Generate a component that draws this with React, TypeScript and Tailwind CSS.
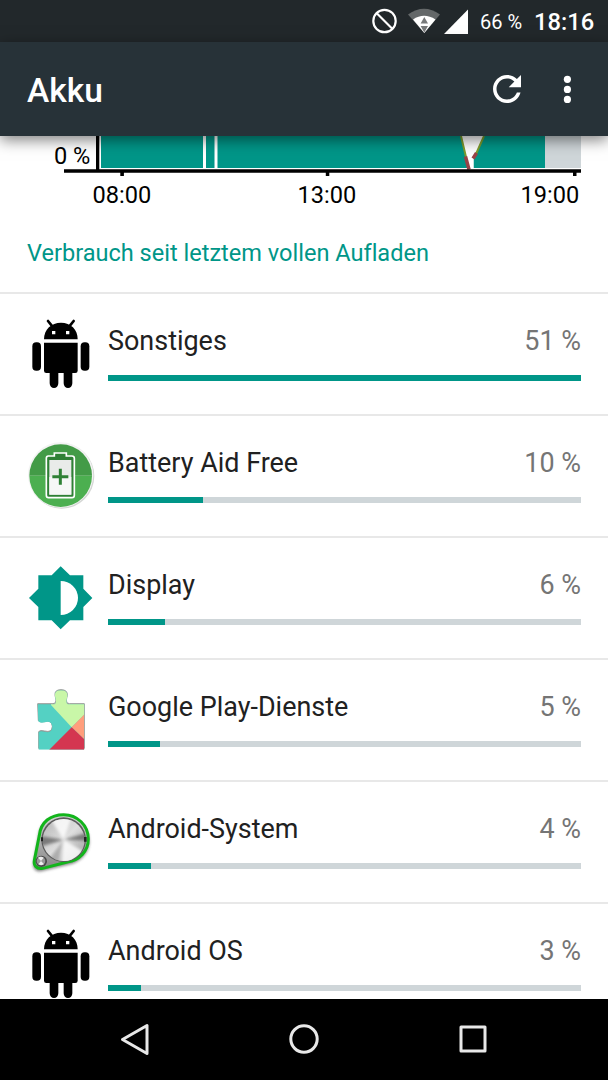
import React from "react";

interface BatteryItem {
  name: string;
  percent: string;
  barWidth: number;
  icon: React.ReactNode;
}

function AndroidIcon() {
  return (
    <svg viewBox="21 12 204 240" className="h-20 w-[68px]">
      <g stroke="#000" strokeWidth="8" strokeLinecap="round">
        <path d="M84 33l13 16M161 33l-13 16" />
      </g>
      <path d="M72 88c0-30 22-50 51-50s50 20 50 50z" />
      <path d="M96 63h10v10H96zM138 63h10v10h-10z" fill="#fff" />
      <path d="M72 98h101v84q0 7-7 7H79q-7 0-7-7z" />
      <rect x="37" y="97" width="26" height="85" rx="12" />
      <rect x="182" y="97" width="26" height="85" rx="12" />
      <path d="M89 180h26v40a13 14 0 0 1-26 0zM131 180h26v40a13 14 0 0 1-26 0z" />
    </svg>
  );
}

function BatteryAidIcon() {
  return (
    <svg viewBox="21 3 204 240" className="h-20 w-[68px]">
      <circle cx="125" cy="123" r="98" fill="#d4d6d4" />
      <circle cx="122" cy="120" r="98" fill="#f3f3f3" />
      <path d="M28 122a94 94 0 0 1 188 0z" fill="#439b47" />
      <path d="M28 122a94 94 0 0 0 188 0z" fill="#4caf50" />
      <path d="M85 63h18v-9h36v9h17q7 0 7 7v111q0 7-7 7H86q-7 0-7-7V70q0-7 6-7z" fill="#2f8035" stroke="#fff" strokeWidth="5" />
      <path d="M88 75h66v104H88z" fill="#e9ebe9" />
      <path d="M88 126h66v53H88z" fill="#f7f7f7" />
      <path d="M121 101v48M97 125h48" stroke="#2f8035" strokeWidth="9" />
    </svg>
  );
}

function DisplayIcon() {
  return (
    <svg viewBox="21 9 204 240" className="h-20 w-[68px]">
      <path d="M122 34l28 27h40v40l27 28-27 27v40h-40l-28 27-27-27H55v-40l-28-27 28-28V61h40z" fill="#009688" />
      <path d="M122 78a52 51 0 0 1 0 102z" fill="#fff" />
    </svg>
  );
}

function PlayServicesIcon() {
  return (
    <svg viewBox="21 0 204 240" className="h-20 w-[68px]">
      <defs>
        <clipPath id="puzzle">
          <path d="M53 71h46q10 0 9-11l-3-14q-2-17 18-17t19 17l-3 14q-1 11 9 11h45v136H56v-52q4-6 18-2 22 6 23-14-2-20-23-14-14 3-19-3z" />
        </clipPath>
      </defs>
      <path d="M53 71h46q10 0 9-11l-3-14q-2-17 18-17t19 17l-3 14q-1 11 9 11h45v134H56v-50q4-6 18-2 22 6 23-14-2-20-23-14-14 3-19-3z" fill="#8c9490" stroke="#9a9f9c" strokeWidth="3" />
      <g clipPath="url(#puzzle)" transform="translate(0 2)">
        <path d="M50 20h147v190H50z" fill="#54d1c3" />
        <path d="M93 73V20h104v78l-42 42z" fill="#c9f7a8" />
        <path d="M155 140l42-43v83z" fill="#ff9e7c" />
        <path d="M155 140l42 40v30H85z" fill="#d43650" />
      </g>
    </svg>
  );
}

function SystemIcon() {
  return (
    <svg viewBox="21 6 204 240" className="h-20 w-[68px]">
      <defs>
        <linearGradient id="plate" x1="0" y1="0" x2="0" y2="1">
          <stop offset="0" stopColor="#d5d5d5" />
          <stop offset="1" stopColor="#888" />
        </linearGradient>
        <linearGradient id="knob" x1="0" y1="0" x2="1" y2="1">
          <stop offset="0" stopColor="#b5b5b5" />
          <stop offset=".5" stopColor="#dedede" />
          <stop offset="1" stopColor="#9c9c9c" />
        </linearGradient>
        <filter id="soft" x="-20%" y="-20%" width="140%" height="140%">
          <feGaussianBlur stdDeviation="5" />
        </filter>
        <clipPath id="knobEdge">
          <circle cx="131" cy="120" r="63" />
        </clipPath>
      </defs>
      <path d="M56 106C60 66 90 43 132 43c42 0 77 34 77 76 0 36-29 66-67 71l-78 19c-18 2-26-11-23-26z" fill="#555" opacity=".75" filter="url(#soft)" transform="translate(-1 5)" />
      <path d="M58 106C62 66 92 44 131 44c41 0 74 32 74 73 0 36-27 64-63 69l-74 19c-18 3-28-9-25-24z" fill="url(#plate)" stroke="#12b51b" strokeWidth="9" />
      <circle cx="131" cy="119" r="67" fill="#5c5c5c" />
      <circle cx="131" cy="120" r="63" fill="url(#knob)" />
      <g clipPath="url(#knobEdge)">
        <g filter="url(#soft)">
          <path d="M131 119L84 45l75-5zM131 119l58 35-25 35-40 5z" fill="#fff" opacity=".8" />
          <path d="M131 119L60 108v32zM131 119l75-22v25z" fill="#666" opacity=".8" />
          <path d="M131 119L86 180l24 14z" fill="#888" opacity=".5" />
        </g>
      </g>
      <path d="M63 112h6v12h-6zM192 111h8v14h-8z" fill="#222" />
      <circle cx="64" cy="184" r="17" fill="#4a4a4a" />
      <circle cx="63" cy="183" r="13" fill="#999" />
      <path d="M63 183l-9-10q9-6 17 0zM63 183l-8 10q8 5 17 0z" fill="#eee" />
    </svg>
  );
}

const ITEMS: BatteryItem[] = [
  { name: "Sonstiges", percent: "51 %", barWidth: 473, icon: <AndroidIcon /> },
  { name: "Battery Aid Free", percent: "10 %", barWidth: 95, icon: <BatteryAidIcon /> },
  { name: "Display", percent: "6 %", barWidth: 57, icon: <DisplayIcon /> },
  { name: "Google Play-Dienste", percent: "5 %", barWidth: 52, icon: <PlayServicesIcon /> },
  { name: "Android-System", percent: "4 %", barWidth: 43, icon: <SystemIcon /> },
  { name: "Android OS", percent: "3 %", barWidth: 33, icon: <AndroidIcon /> },
];

function StatusBar() {
  return (
    <div className="flex h-[42px] shrink-0 items-center bg-[#22282b] pl-[371px] text-white">
      <svg viewBox="0 0 26 26" className="mr-[10px] h-[26px] w-[26px]" fill="none" stroke="#fff" strokeWidth="2.2">
        <circle cx="13.5" cy="13" r="11.2" />
        <path d="M5.5 5l16 16" />
      </svg>
      <svg viewBox="0 0 34 26" className="mr-[3px] h-[26px] w-[34px]">
        <path d="M1 6.5Q17-5 33 6.5L17.300 25z" fill="#646869" />
        <path d="M6 11.500Q17 4 28.500 11.500L17.300 25z" fill="#fff" />
        <path d="M17.300 9l3.700 6.500h-7.400zM13.600 18H21l-3.700 6.500z" fill="#77797a" />
      </svg>
      <svg viewBox="0 0 25 25" className="h-[25px] w-[25px]">
        <path d="M24 .5V25H0z" fill="#fff" />
      </svg>
      <span className="ml-[11px] mt-[2px] w-[54px] whitespace-nowrap text-[20px] leading-[28px]">66 %</span>
      <span className="mt-[2px] whitespace-nowrap text-[23.7px] leading-[28px] font-medium">18:16</span>
    </div>
  );
}

function Toolbar() {
  return (
    <header className="z-10 flex h-[94px] shrink-0 items-center bg-[#273238] pl-[27px] pr-[37px] text-white shadow-[0_4px_14px_rgba(0,0,0,0.5)]">
      <h1 className="mt-[3px] flex-1 text-[33.5px] leading-[40px] font-medium">Akku</h1>
      <svg viewBox="4 4 16 16" className="mr-[42px] h-[28px] w-[28px]" fill="#fff">
        <path d="M17.650 6.350C16.200 4.900 14.210 4 12 4c-4.420 0-7.990 3.580-7.990 8s3.570 8 7.990 8c3.730 0 6.840-2.550 7.730-6h-2.080c-.82 2.330-3.040 4-5.650 4-3.310 0-6-2.690-6-6s2.690-6 6-6c1.660 0 3.140.69 4.220 1.780L13 11h7V4l-2.350 2.350z" />
      </svg>
      <svg viewBox="0 0 8 28" className="h-[28px] w-[8px]" fill="#fff">
        <circle cx="4.400" cy="4.300" r="3.600" />
        <circle cx="4.400" cy="14.400" r="3.600" />
        <circle cx="4.400" cy="24.400" r="3.600" />
      </svg>
    </header>
  );
}

function HistoryChart() {
  return (
    <div className="flex h-[76px] shrink-0 flex-col text-[23.6px] leading-[28px] text-black">
      <div className="flex h-10">
        <span className="mt-[6px] w-[64px] shrink-0 whitespace-nowrap pl-[54px]">0 %</span>
        <svg viewBox="64 136 517 40" className="h-10 w-[517px] shrink-0">
          <path d="M101 136h102v32H101zM206 136h8.500v32H206zM217.500 136H461l7.500 32h-251zM484 136h61v32h-71.500v-10z" fill="#009688" />
          <path d="M545 136h36v32h-36z" fill="#cfd6d9" />
          <path d="M461 136l8 32h4.500v-10L484 136z" fill="#fff" />
          <path d="M461 136l5 21M484 136l-8 18" stroke="#7d9b2c" strokeWidth="2" />
          <path d="M465.500 156.500l3.500 13M476.500 153l-3.500 5.500" stroke="#994348" strokeWidth="3.500" fill="none" />
          <path d="M96 136h3.300v34H96z" />
          <path d="M64 169.300h517v3.500H64zM120.300 172h3.600v4h-3.600zM325.800 172h3.500v4h-3.500zM573 172h3.500v4H573z" />
        </svg>
      </div>
      <div className="mt-[5px] grid grid-cols-[92.500px_205px_223px_1fr] whitespace-nowrap">
        <span className="col-start-2">08:00</span>
        <span>13:00</span>
        <span>19:00</span>
      </div>
    </div>
  );
}

function BatteryRow({ item }: { item: BatteryItem }) {
  return (
    <li className="flex h-[122px] shrink-0 border-t-2 border-[#e8e8e8] pl-[27px] pr-[27px] pt-5">
      <div className="mr-[13px] w-[68px] shrink-0">{item.icon}</div>
      <div className="flex-1 pt-[10px]">
        <div className="flex justify-between text-[26.95px] leading-[34px]">
          <span className="text-[#212121]">{item.name}</span>
          <span className="text-[#757575]">{item.percent}</span>
        </div>
        <div className="mt-[17px] h-[6px] bg-[#cfd6d9]">
          <div className="h-full bg-[#009688]" style={{ width: item.barWidth }} />
        </div>
      </div>
    </li>
  );
}

function NavigationBar() {
  return (
    <nav className="flex h-[81px] shrink-0 items-center justify-between bg-black px-[119px] pb-px">
      <svg viewBox="0 0 32 34" className="h-[34px] w-[32px]" fill="none" stroke="#e8e8e8" strokeWidth="3" strokeLinejoin="round">
        <path d="M28 3.500v28L3.500 17.500z" />
      </svg>
      <svg viewBox="0 0 32 32" className="h-8 w-8" fill="none" stroke="#e8e8e8" strokeWidth="3">
        <circle cx="16" cy="16" r="13.200" />
      </svg>
      <svg viewBox="0 0 32 32" className="h-8 w-8" fill="none" stroke="#e8e8e8" strokeWidth="3" strokeLinejoin="round">
        <path d="M4 4h24v24H4z" />
      </svg>
    </nav>
  );
}

export default function App() {
  return (
    <div className="flex h-[1080px] w-[608px] flex-col overflow-hidden bg-white font-['Roboto',sans-serif] [font-variant-ligatures:none]">
      <StatusBar />
      <Toolbar />
      <main className="flex min-h-0 flex-1 flex-col overflow-hidden">
        <HistoryChart />
        <h2 className="h-20 shrink-0 pl-[27px] pt-[27px] text-[23.55px] leading-[28px] text-[#009688]">Verbrauch seit letztem vollen Aufladen</h2>
        <ul className="flex flex-col">
          {ITEMS.map((item) => (
            <BatteryRow key={item.name} item={item} />
          ))}
        </ul>
      </main>
      <NavigationBar />
    </div>
  );
}
